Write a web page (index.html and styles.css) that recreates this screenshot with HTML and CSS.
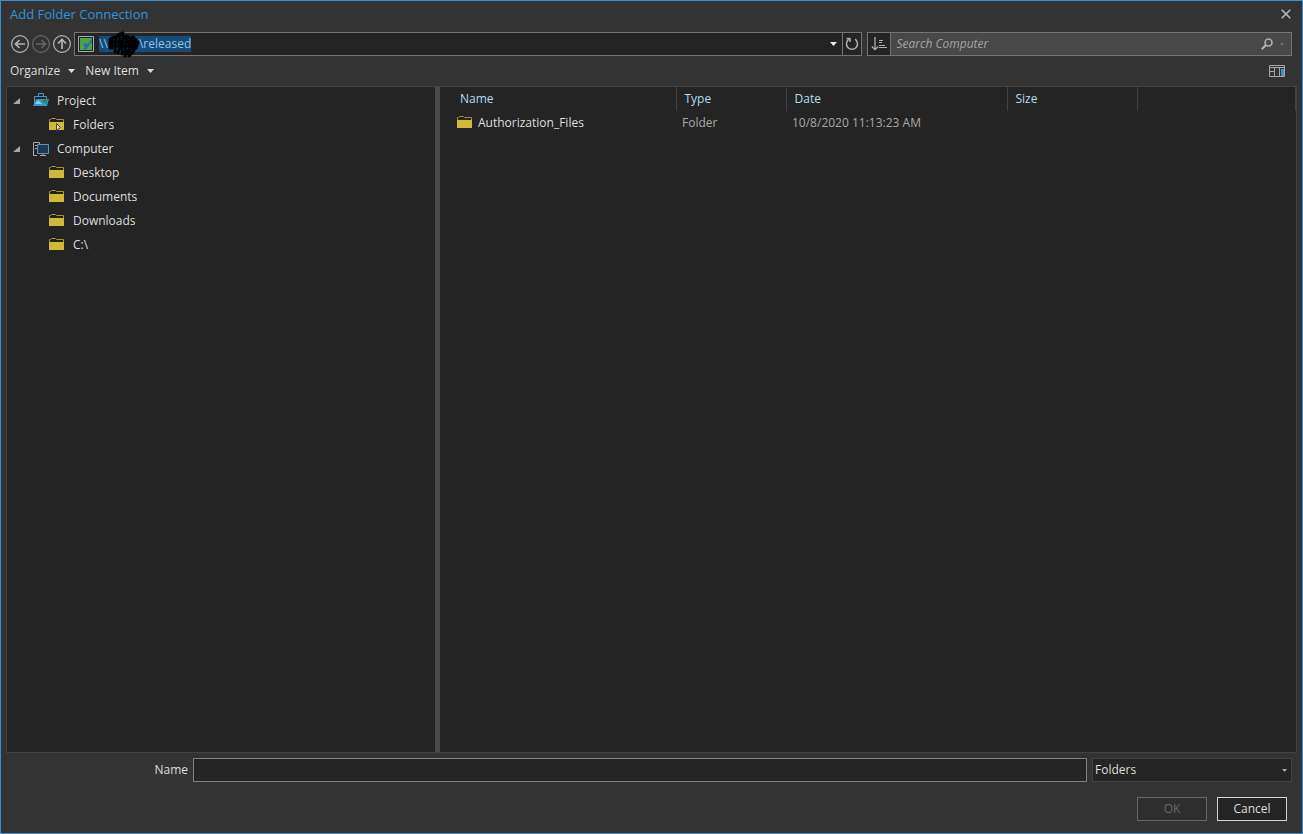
FILE: index.html
```html
<!DOCTYPE html>
<html lang="en">
<head>
<meta charset="utf-8">
<title>Add Folder Connection</title>
<link rel="stylesheet" href="styles.css">
</head>
<body>
<svg class="symbols" aria-hidden="true">
  <symbol id="folder" viewBox="0 0 16 16">
    <path fill="#d0b934" d="M0 5h15v8H0z"/>
    <path fill="none" stroke="#a99430" d="M.5 5V2.500h1l1-1h4l1 1h7V5"/>
    <path fill="#1f1d14" d="M1 3h13v1H1z"/>
  </symbol>
  <symbol id="caret" viewBox="0 0 7 4"><path fill="currentColor" d="M0 0h7L3.500 4z"/></symbol>
  <symbol id="expanded" viewBox="0 0 7 7"><path fill="#a6a6a6" d="M7 0v6H0z"/></symbol>
</svg>
<main class="dialog">
  <header class="titlebar">
    <h1 class="title">Add Folder Connection</h1>
    <button class="icon-button close" aria-label="Close"><svg width="10" height="10" viewBox="0 0 10 10"><path d="M.7.7l8.600 8.600M9.300.7L.7 9.300" fill="none" stroke="#b8b8b8" stroke-width="1.600"/></svg></button>
  </header>

  <div class="navigation">
    <div class="history">
      <button class="icon-button" aria-label="Back"><svg width="20" height="20" viewBox="0 0 20 20" fill="none" stroke="#b4b4b4"><circle cx="10" cy="10" r="8.400" stroke-width="1.200"/><path d="M15 10H6M9.500 6L5.500 10l4 4" stroke-width="1.700"/></svg></button>
      <button class="icon-button" aria-label="Forward" disabled><svg width="20" height="20" viewBox="0 0 20 20" fill="none" stroke="#666"><circle cx="10" cy="10" r="8.400" stroke-width="1.200"/><path d="M5 10h9M10.500 6l4 4-4 4" stroke-width="1.500"/></svg></button>
      <button class="icon-button" aria-label="Up"><svg width="20" height="20" viewBox="0 0 20 20" fill="none" stroke="#b4b4b4"><circle cx="10" cy="10" r="8.400" stroke-width="1.200"/><path d="M10 15V6M6 9.500l4-4 4 4" stroke-width="1.700"/></svg></button>
    </div>
    <div class="address">
      <svg width="16" height="16" viewBox="0 0 16 16"><path fill="#1d2428" stroke="#aaa" d="M.5.5h15v15H.5z"/><path fill="#4da447" d="M2 2h12v12H2z"/><path fill="#2c6fa8" d="M14 3v4l-2 1-2 3-2 3H6l1-3-2-2 2-2 3 1 2-3z"/></svg>
      <div class="path">
        <input class="path-input" aria-label="Location" value="\\          \released">
        <svg class="redaction" width="34" height="28" viewBox="0 0 34 28" fill="none" stroke="#000" stroke-linecap="round" stroke-linejoin="round"><path stroke-width="3" d="M3 8v9M5 17V7l4-1-1 15M9 6l3-3 1 12-2 7M13 3l3-1-1 21M16 8l4-3-2 20 3-5M20 6l3 1-1 18M23 8l3-2 3 3-2 10-4 5M25 8l1 13M29 10l2 1-2 6-3 2M6 11h21M8 15h18"/></svg>
      </div>
      <button class="icon-button history-menu" aria-label="Recent locations"><svg width="7" height="4"><use href="#caret"/></svg></button>
      <button class="icon-button refresh" aria-label="Refresh"><svg width="14" height="14" viewBox="0 0 14 14" fill="none" stroke="#adadad" stroke-width="1.500"><path d="M10 2.200A5.500 5.500 0 1 1 4 2.200"/><path d="M1.500 1.500H5V5"/></svg></button>
    </div>
    <div class="search">
      <button class="icon-button sort" aria-label="Sort"><svg width="16" height="14" viewBox="0 0 16 14" fill="none" stroke="#adadad"><path stroke-width="1.300" d="M4 0v12.500M.8 9.500L4 12.700l3.200-3.200"/><path d="M8 3.500h4M8 5.500h3M8 8.500h6M8 10.500h8"/></svg></button>
      <input class="search-input" type="search" aria-label="Search Computer" placeholder="Search Computer">
      <button class="icon-button" aria-label="Search"><svg width="12" height="12" viewBox="0 0 12 12" fill="none" stroke="#b0b0b0"><circle cx="7.500" cy="4.500" r="3.500" stroke-width="1.600"/><path stroke-width="2" d="M5 7L.7 11.300"/></svg></button>
      <button class="icon-button search-menu" aria-label="Search options"><svg width="4" height="3" viewBox="0 0 7 4"><use href="#caret"/></svg></button>
    </div>
  </div>

  <div class="toolbar">
    <button class="menu">Organize <svg width="7" height="4"><use href="#caret"/></svg></button>
    <button class="menu">New Item <svg width="7" height="4"><use href="#caret"/></svg></button>
    <button class="icon-button details" aria-label="Show details panel"><svg width="16" height="12" viewBox="0 0 16 12"><path fill="none" stroke="#a8a8a8" d="M.5.5h15v11H.5zM0 2.500h16M5.500 3v9M10.500 3v9M1 6.500h4"/><path fill="#3f94cb" d="M12 4h3v7h-3z"/></svg></button>
  </div>

  <div class="browser">
    <nav class="tree" aria-label="Locations">
      <ul class="tree-list">
        <li>
          <button class="node"><svg width="7" height="7"><use href="#expanded"/></svg><svg class="node-icon root-icon" width="16" height="16" viewBox="0 0 16 16"><path fill="none" stroke="#3e9bd3" d="M5.500 3V.5h5V3M1.500 13V3.500h12V6"/><path fill="#3498cf" d="M0 13l3-7h13l-2 7z"/><path fill="#92cdec" d="M2 11l3-4 4 4z"/><path fill="#348144" d="M9 7l6-1-2 5-3-2z"/></svg>Project</button>
          <ul class="tree-list children">
            <li><button class="node"><svg class="node-icon" width="16" height="16" viewBox="0 0 16 16"><use href="#folder"/><path fill="#ddd" stroke="#4c4040" d="M7.500 6.500v7l4-3z"/></svg>Folders</button></li>
          </ul>
        </li>
        <li>
          <button class="node"><svg width="7" height="7"><use href="#expanded"/></svg><svg class="node-icon root-icon" width="16" height="16" viewBox="0 0 16 16"><path fill="none" stroke="#aaa" d="M6.500 3V1.500h-6v13H4M2 4.500h2M2 7.500h2"/><path fill="#243846" stroke="#4b9dce" d="M4.500 3.500h11v9h-11z"/><path stroke="#aaa" d="M7 14.500h6M10 13v1"/></svg>Computer</button>
          <ul class="tree-list children">
            <li><button class="node"><svg class="node-icon" width="16" height="16"><use href="#folder"/></svg>Desktop</button></li>
            <li><button class="node"><svg class="node-icon" width="16" height="16"><use href="#folder"/></svg>Documents</button></li>
            <li><button class="node"><svg class="node-icon" width="16" height="16"><use href="#folder"/></svg>Downloads</button></li>
            <li><button class="node"><svg class="node-icon" width="16" height="16"><use href="#folder"/></svg>C:\</button></li>
          </ul>
        </li>
      </ul>
    </nav>
    <section class="files" aria-label="Files">
      <table class="file-table">
        <colgroup><col class="col-name"><col class="col-type"><col class="col-date"><col class="col-size"><col></colgroup>
        <thead><tr><th scope="col">Name</th><th scope="col">Type</th><th scope="col">Date</th><th scope="col">Size</th><td></td></tr></thead>
        <tbody><tr><td><span class="file-name"><svg width="16" height="16"><use href="#folder"/></svg>Authorization_Files</span></td><td>Folder</td><td>10/8/2020 11:13:23 AM</td><td></td><td></td></tr></tbody>
      </table>
    </section>
  </div>

  <form class="footer">
    <div class="name-row">
      <label class="name-label" for="name">Name</label>
      <input class="name-input" id="name" type="text">
      <div class="filter">
        <select class="filter-select" aria-label="Item type"><option>Folders</option></select>
        <svg class="filter-caret" width="5" height="3" viewBox="0 0 7 4"><use href="#caret"/></svg>
      </div>
    </div>
    <div class="actions">
      <button class="action" type="submit" disabled>OK</button>
      <button class="action" type="button">Cancel</button>
    </div>
  </form>
</main>
</body>
</html>
```
FILE: styles.css
```css
* { box-sizing: border-box; }

body {
  margin: 0;
  background: #333;
  color: #dedede;
  font: 12px/16px "Open Sans", "Noto Sans", sans-serif;
}

button, input, select {
  margin: 0;
  padding: 0;
  border: 0;
  border-radius: 0;
  outline: 0;
  background: transparent;
  color: inherit;
  font: inherit;
}

svg { display: block; flex: none; }

.symbols { position: absolute; width: 0; height: 0; }

.dialog {
  display: flex;
  flex-direction: column;
  min-height: 100vh;
  border: 1px solid #3b8fd0;
}

.icon-button { display: flex; align-items: center; justify-content: center; }

.titlebar {
  display: flex;
  align-items: center;
  justify-content: space-between;
  height: 26px;
  padding: 0 11px 0 9px;
}

.title { margin: 0; color: #3294dc; font-size: 13px; font-weight: 400; }

.navigation {
  display: flex;
  gap: 5px;
  height: 24px;
  margin: 5px 10px 0 9px;
}

.history { display: flex; align-items: center; gap: 1px; }

.address, .search {
  display: flex;
  align-items: center;
  border: 1px solid #747474;
  background: #242424;
}

.history + .address { margin-left: -3px; }

.address { flex: 788 1 0; padding-left: 3px; }

.path { position: relative; flex: 1; margin-left: 5px; }

.path-input {
  display: block;
  width: 92px;
  height: 16px;
  background: #174b78;
  color: #8fc5ef;
}

.redaction { position: absolute; left: 8px; top: -5px; }

.history-menu { width: 18px; height: 100%; color: #e8e8e8; }

.refresh { width: 19px; height: 100%; border-left: 1px solid #747474; }

.search { flex: 425 1 0; background: #484848; }

.sort { width: 23px; height: 100%; border-right: 1px solid #747474; background: #242424; }

.search-input { flex: 1; min-width: 0; padding-left: 5px; font-style: italic; }

.search-input::placeholder { color: #a5a5a5; opacity: 1; }

.search-menu { width: 18px; color: #7a7a7a; }

.toolbar {
  display: flex;
  align-items: center;
  gap: 10px;
  height: 30px;
  padding: 0 17px 0 9px;
}

.menu { display: flex; align-items: center; gap: 8px; }

.details { margin-left: auto; }

.browser {
  display: grid;
  grid-template-columns: 428px 1fr;
  gap: 5px;
  flex: 1;
  margin: 0 5px;
  border: 1px solid #424242;
  background: #4a4a4a;
}

.tree, .files { background: #242424; }

.tree { padding-top: 2px; }

.tree-list { margin: 0; padding: 0; list-style: none; }

.children { padding-left: 36px; }

.node { display: flex; align-items: center; width: 100%; height: 24px; padding-left: 6px; }

.node-icon { margin-right: 8px; }

.root-icon { margin-left: 13px; }

.file-table { width: 100%; border-collapse: collapse; table-layout: fixed; }

.col-name { width: 236px; }
.col-type { width: 110px; }
.col-date { width: 221px; }
.col-size { width: 130px; }

.file-table th, .file-table td { height: 24px; padding: 0 0 0 6px; text-align: left; }

.file-table thead th, .file-table thead td { border-right: 1px solid #424242; }

.file-table th { padding-left: 8px; color: #b5dcef; font-weight: 400; }

.file-table th:first-child { padding-left: 20px; }

.file-table td { color: #a8a8a8; }

.file-table td:first-child { padding-left: 17px; }

.file-name { display: flex; align-items: center; gap: 5px; color: #dedede; }

.footer { padding: 5px 10px 12px; }

.name-row {
  display: grid;
  grid-template-columns: 177px 1fr 200px;
  column-gap: 5px;
}

.name-label { align-self: center; text-align: right; }

.name-input { height: 24px; padding: 0 4px; border: 1px solid #808080; background: #242424; }

.filter { position: relative; }

.filter-select {
  width: 100%;
  height: 24px;
  padding: 0 2px;
  border: 1px solid #424242;
  background: #242424;
  appearance: none;
}

.filter-caret { position: absolute; right: 5px; top: 11px; color: #aaa; pointer-events: none; }

.actions { display: flex; justify-content: flex-end; gap: 10px; margin: 15px 5px 0 0; }

.action { width: 70px; height: 24px; border: 1px solid #d4d4d4; background: #242424; }

.action:disabled { border-color: #666; background: #2e2e2e; color: #686868; }
```
